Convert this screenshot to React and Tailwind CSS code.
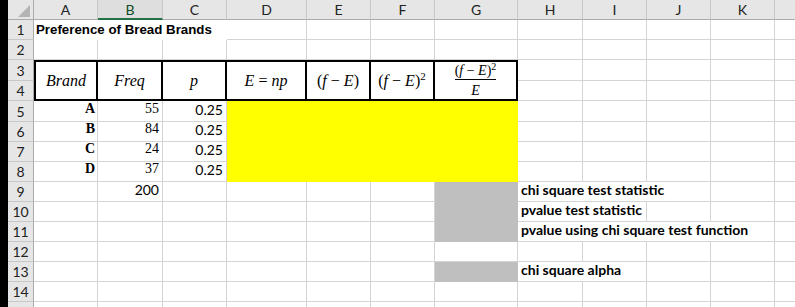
import React from "react";

const COL = ["col-start-1", "col-start-2", "col-start-3", "col-start-4", "col-start-5", "col-start-6", "col-start-7", "col-start-8", "col-start-9", "col-start-10", "col-start-11", "col-start-12", "col-start-13"];
const ROW = ["row-start-1", "row-start-2", "row-start-3", "row-start-4", "row-start-5", "row-start-6", "row-start-7", "row-start-8", "row-start-9", "row-start-10", "row-start-11", "row-start-12", "row-start-13", "row-start-14", "row-start-15", "row-start-16"];
const CSPAN = ["", "col-span-1", "col-span-2", "col-span-3", "col-span-4"];
const RSPAN = ["", "row-span-1", "row-span-2", "row-span-3", "row-span-4"];

// last column (L) is only partly on screen, its label falls outside
const LETTERS = ["A", "B", "C", "D", "E", "F", "G", "H", "I", "J", "K", ""];

const serif = "font-['Liberation_Serif',serif]";
const calibri = "font-['Lato',sans-serif]";
const head = `${serif} italic text-[16px] text-black`;
const tableCell = "border-t-2 border-b-2 border-r-2 border-black bg-white flex items-center justify-center";

// sheet coords: r = 1..15, c = 1..12 (A..L)
const specials = [
  { r: 1, c: 1, cs: 3, cls: "flex items-center pl-[2px] font-['Liberation_Sans',sans-serif] font-bold text-[13.3px] text-black", body: "Preference of Bread Brands" },
  { r: 3, c: 1, rs: 2, cls: `${tableCell} border-l-2 ${head}`, body: "Brand" },
  { r: 3, c: 2, rs: 2, cls: `${tableCell} ${head}`, body: "Freq" },
  { r: 3, c: 3, rs: 2, cls: `${tableCell} ${head}`, body: "p" },
  { r: 3, c: 4, rs: 2, cls: `${tableCell} ${head}`, body: (<span>E <span className="not-italic">=</span> np</span>) },
  { r: 3, c: 5, rs: 2, cls: `${tableCell} ${head}`, body: (<span><span className="not-italic">(</span>f <span className="not-italic">−</span> E<span className="not-italic">)</span></span>) },
  { r: 3, c: 6, rs: 2, cls: `${tableCell} ${head}`, body: (<span><span className="not-italic">(</span>f <span className="not-italic">−</span> E<span className="not-italic">)</span><sup className="not-italic text-[11px]">2</sup></span>) },
  {
    r: 3, c: 7, rs: 2, cls: `${tableCell} ${serif} italic text-black`, body: (
      <div className="flex flex-col items-center leading-none">
        <span className="text-[14px] border-b border-black pb-[1px]"><span className="not-italic">(</span>f <span className="not-italic">−</span> E<span className="not-italic">)</span><sup className="not-italic text-[10px]">2</sup></span>
        <span className="text-[14px] pt-[4px]">E</span>
      </div>
    )
  },
  { r: 5, c: 4, rs: 4, cs: 4, cls: "bg-[#ffff00]" },
  { r: 9, c: 7, rs: 3, cls: "bg-[#bfbfbf]" },
  { r: 13, c: 7, cls: "bg-[#bfbfbf]" },
  { r: 9, c: 8, cs: 3, lbl: "chi square test statistic" },
  { r: 10, c: 8, cs: 2, lbl: "pvalue test statistic" },
  { r: 11, c: 8, cs: 4, lbl: "pvalue using chi square test function" },
  { r: 13, c: 8, cs: 2, lbl: "chi square alpha" },
  { r: 9, c: 2, num: "200" },
];

const brands = [["A", "55"], ["B", "84"], ["C", "24"], ["D", "37"]];
brands.forEach(([b, f], i) => {
  specials.push({ r: 5 + i, c: 1, cls: `flex items-end justify-end pr-[2px] pb-[2px] border-r border-b border-[#d4d4d4] ${serif} font-bold text-[14px] text-black`, body: b });
  specials.push({ r: 5 + i, c: 2, cls: `flex items-end justify-end pr-[3px] pb-[2px] border-r border-b border-[#d4d4d4] ${serif} text-[14px] text-black`, body: f });
  specials.push({ r: 5 + i, c: 3, num: "0.25" });
});

function Corner() {
  return (
    <div className={`${ROW[0]} ${COL[0]} bg-[#e6e6e6] border-r border-b border-[#ababab] flex items-end justify-end pr-[3px] pb-[2px]`}>
      <svg width="12" height="12" viewBox="0 0 12 12">
        <polygon points="12,0 12,12 0,12" fill="#b4b4b4" />
      </svg>
    </div>
  );
}

export default function App() {
  const taken = {};
  specials.forEach((s) => {
    for (let r = s.r; r < s.r + (s.rs || 1); r++)
      for (let c = s.c; c < s.c + (s.cs || 1); c++) taken[r + "-" + c] = true;
  });

  const base = [];
  for (let r = 1; r <= 15; r++) {
    for (let c = 1; c <= 12; c++) {
      if (taken[r + "-" + c]) continue;
      base.push(
        <div key={"b" + r + "-" + c} className={`${ROW[r]} ${COL[c]} border-r border-b border-[#d4d4d4] bg-white`} />
      );
    }
  }

  return (
    <div className="flex h-[307px] w-[795px] overflow-hidden bg-white">
      <div className="w-[8px] shrink-0 bg-black" />
      <div className="grid shrink-0 grid-cols-[26px_64px_65px_64px_80px_64px_64px_83px_65px_64px_64px_64px_64px] grid-rows-[20px_20px_20px_21px_20px_21px_repeat(9,20px)_20px]">
        <Corner />
        {LETTERS.map((l, i) => (
          <div
            key={"h" + i}
            className={`${ROW[0]} ${COL[i + 1]} flex items-center justify-center border-r border-[#c8c8c8] ${calibri} text-[14px] ${l === "B" ? "bg-[#dedede] border-b-2 border-b-[#217346] text-[#0e4a28]" : "bg-[#e6e6e6] border-b border-b-[#ababab] text-[#222]"}`}
          >
            {l}
          </div>
        ))}
        {Array.from({ length: 15 }, (_, i) => (
          <div
            key={"r" + i}
            className={`${ROW[i + 1]} ${COL[0]} flex items-center justify-center bg-[#e6e6e6] border-r border-r-[#ababab] border-b border-b-[#c8c8c8] ${calibri} text-[14px] text-[#222]`}
          >
            {i < 14 ? i + 1 : ""}
          </div>
        ))}
        {base}
        {specials.map((s, i) => {
          const pos = `${ROW[s.r]} ${COL[s.c]} ${CSPAN[s.cs || 1]} ${RSPAN[s.rs || 1]}`;
          if (s.lbl)
            return (
              <div key={"s" + i} className={`${pos} flex items-end pl-[3px] pb-[1px] border-r border-b border-[#d4d4d4] bg-white ${calibri} font-bold text-[14px] text-black whitespace-nowrap`}>
                {s.lbl}
              </div>
            );
          if (s.num)
            return (
              <div key={"s" + i} className={`${pos} flex items-end justify-end pr-[3px] pb-[1px] border-r border-b border-[#d4d4d4] bg-white ${calibri} text-[14px] text-black`}>
                {s.num}
              </div>
            );
          return (
            <div key={"s" + i} className={`${pos} ${s.cls}`}>
              {s.body}
            </div>
          );
        })}
      </div>
    </div>
  );
}
